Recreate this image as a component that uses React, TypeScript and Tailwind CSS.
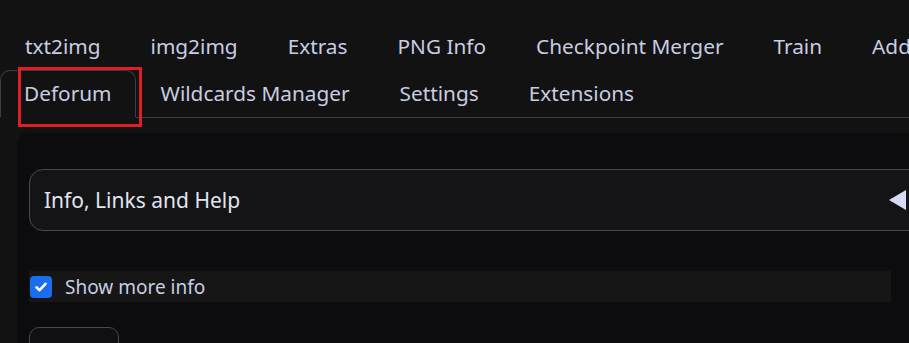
import React from 'react';

const topTabs = ['txt2img', 'img2img', 'Extras', 'PNG Info', 'Checkpoint Merger', 'Train', 'Additional Networks'];
const bottomTabs = ['Wildcards Manager', 'Settings', 'Extensions'];

export default function App() {
  return (
    <div className="relative w-[909px] h-[343px] overflow-hidden bg-[#121212] font-['Noto_Sans',sans-serif] text-[#c8cde2]">
      {/* tab navigation */}
      <div className="pt-[23px]">
        <div className="flex whitespace-nowrap">
          {topTabs.map(tab => (
            <div key={tab} className="h-[47px] px-[24px] border border-transparent flex items-center text-[20.8px] shrink-0">
              {tab}
            </div>
          ))}
        </div>
        <div className="flex whitespace-nowrap">
          <div className="h-[47px] px-[23px] border border-b-0 border-[#3c3c42] rounded-t-[10px] flex items-center text-[20.8px] shrink-0">
            Deforum
          </div>
          <div className="flex flex-1 border-b border-[#3c3c42]">
            {bottomTabs.map(tab => (
              <div key={tab} className="h-[47px] px-[24px] border border-transparent flex items-center text-[20.8px] shrink-0">
                {tab}
              </div>
            ))}
          </div>
        </div>
      </div>

      {/* tab panel */}
      <div className="ml-[17px] mt-[15px] w-[920px] h-[300px] bg-[#0c0c0e] rounded-tl-[10px] pl-3 pt-9">
        <div className="w-[920px] h-[62px] rounded-[14px] border border-[#48484f] bg-[#141416] flex items-center pl-[14px] pt-[2px] relative">
          <span className="text-[21px] text-[#e2e5f0]">Info, Links and Help</span>
          <span className="absolute left-[859px] top-[20px] w-0 h-0 border-y-[10px] border-y-transparent border-r-[17px] border-r-[#d7dbf7]"></span>
        </div>

        <div className="mt-10 w-[862px] h-[31px] bg-[#161617] flex items-center gap-[13px] pl-px">
          <div className="w-[22px] h-[22px] rounded-[4px] bg-[#1a6cf0] flex items-center justify-center">
            <svg width="14" height="14" viewBox="0 0 14 14" fill="none">
              <path d="M2.5 7.3 L5.6 10.2 L11.5 3.8" stroke="white" strokeWidth="2.6" strokeLinecap="round" strokeLinejoin="round" />
            </svg>
          </div>
          <span className="pt-[2px] text-[19px] text-[#c8cde2]">Show more info</span>
        </div>

        <div className="mt-[25px] flex items-start">
          <div className="w-[90px] h-[40px] rounded-[10px] border border-[#48484f] bg-[#101012]"></div>
        </div>
      </div>

      {/* screenshot highlight */}
      <div className="absolute left-[18px] top-[67px] w-[124px] h-[60px] border-[3px] border-[#e01e25]"></div>
    </div>
  );
}
